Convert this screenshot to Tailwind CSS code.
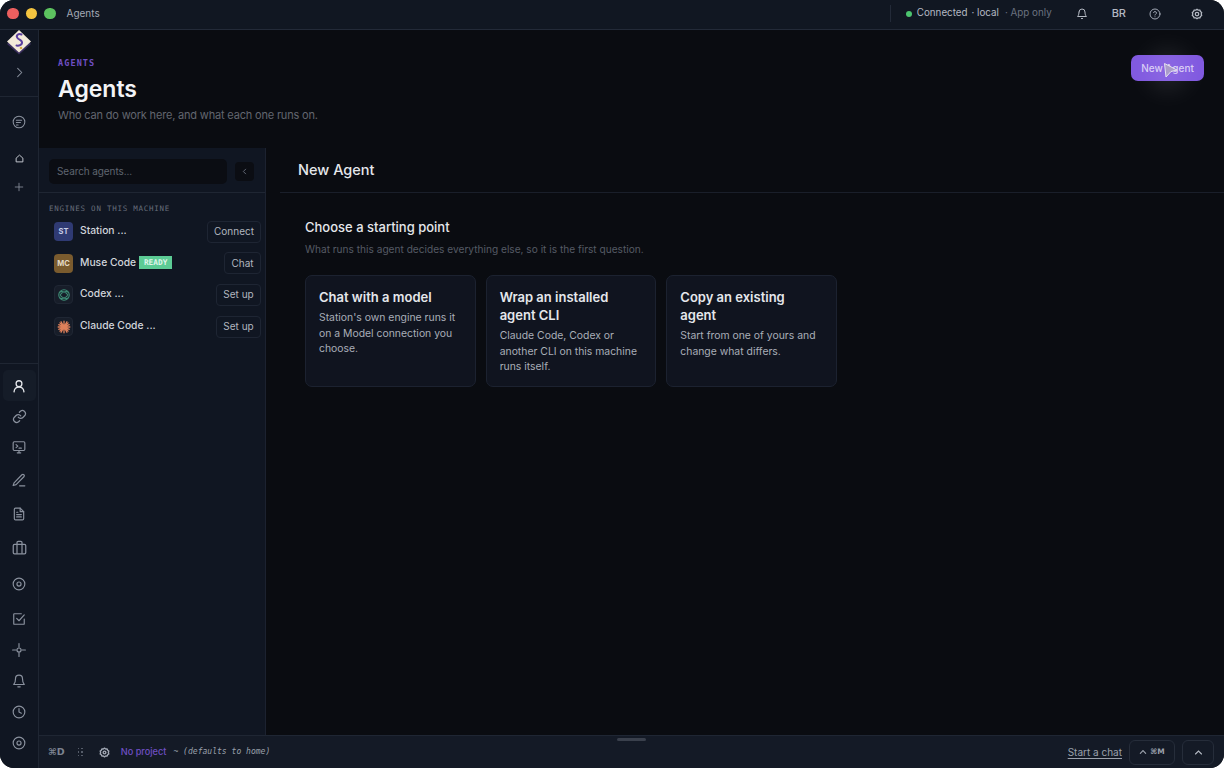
<!DOCTYPE html>
<html lang="en">
<head>
    <meta name="viewport" content="width=device-width, initial-scale=1.0">
    <title>Agents</title>
    <script src="https://cdn.jsdelivr.net/npm/@tailwindcss/browser@4"></script>
</head>
<body class="bg-white font-['Inter',sans-serif] overflow-hidden">
<div class="relative w-[1224px] h-[768px] flex flex-col rounded-[14px] overflow-hidden bg-[#0a0c11] text-gray-200">

    <!-- title bar -->
    <header class="h-[30px] shrink-0 flex items-center bg-[#111722] border-b border-[#232a38] pl-[7px] pb-[2px]">
        <div class="flex gap-[7px] items-center">
            <span class="w-[11.5px] h-[11.5px] rounded-full bg-[#ec5f5f]"></span>
            <span class="w-[11.5px] h-[11.5px] rounded-full bg-[#f4c440]"></span>
            <span class="w-[11.5px] h-[11.5px] rounded-full bg-[#5cc25f]"></span>
        </div>
        <span class="ml-[11px] text-[10px] text-[#a3a9b5]">Agents</span>
        <div class="ml-auto flex items-center h-full text-[9.800px]">
            <span class="w-px h-[17px] bg-[#232a38] mr-[15px]"></span>
            <span class="w-[6px] h-[6px] rounded-full bg-[#4cc46f] mr-[5px]"></span>
            <span class="text-[#b4b9c3]">Connected</span>
            <span class="ml-[4px] text-[#b4b9c3]">· local</span>
            <span class="ml-[6px] text-[#6b7280]">· App only</span>
            <svg class="ml-[24px]" width="12" height="12" viewBox="0 0 24 24" fill="none" stroke="#b4b9c3" stroke-width="2" stroke-linecap="round" stroke-linejoin="round"><path d="M6 8a6 6 0 0 1 12 0c0 7 3 9 3 9H3s3-2 3-9"/><path d="M10.5 21a1.8 1.8 0 0 0 3 0"/></svg>
            <span class="ml-[24px] text-[11px] font-medium text-[#b4b9c3]">BR</span>
            <svg class="ml-[23px]" width="12" height="12" viewBox="0 0 24 24" fill="none" stroke="#a3a9b5" stroke-width="2" stroke-linecap="round" stroke-linejoin="round"><circle cx="12" cy="12" r="10"/><path d="M9.1 9a3 3 0 0 1 5.8 1c0 2-3 2.6-3 4"/><path d="M12 17.5h.01"/></svg>
            <svg class="ml-[30px] mr-[21px]" width="12" height="12" viewBox="0 0 24 24" fill="none" stroke="#b4b9c3" stroke-width="2.500" stroke-linejoin="round"><path d="M12 2.5l2.6 1.8 3.2-.2 1 3 2.6 1.900-1 3 1 3-2.600 1.900-1 3-3.200-.2L12 21.500l-2.600-1.800-3.200.2-1-3-2.600-1.900 1-3-1-3 2.600-1.900 1-3 3.200.2z"/><circle cx="12" cy="12" r="3.500"/></svg>
        </div>
    </header>

    <div class="flex-1 min-h-0 flex">
        <!-- icon rail -->
        <nav class="w-[39px] shrink-0 flex flex-col bg-[#101622] border-r border-[#1f2633] text-[#8a919e]">
            <div class="h-[67px] shrink-0 flex flex-col items-center border-b border-[#1f2633]">
                <svg class="-mt-[1px]" width="26" height="26" viewBox="0 0 26 26">
                    <path d="M13 3.500L25 15 13 25.500 1 15z" fill="#3b2f5e"/>
                    <path d="M13 1L25 12.500 13 23.500 1 12.500z" fill="#f3ead9"/>
                    <path d="M15.500 5.500c-3-1.500-6 1-4 3.500 1.500 2 5 2 4.500 5-.3 2-3 3-5.500 2.500" fill="none" stroke="#5b3f9e" stroke-width="2" stroke-linecap="round"/>
                    <circle cx="15" cy="19" r="1.300" fill="#d6a94a"/>
                </svg>
                <svg class="mt-[12px]" width="11" height="11" viewBox="0 0 24 24" fill="none" stroke="currentColor" stroke-width="2.200" stroke-linecap="round" stroke-linejoin="round"><path d="M8 3l9 9-9 9"/></svg>
            </div>
            <div class="flex flex-col items-center">
                <span class="h-[25px] mt-[12px] flex items-center">
                    <svg width="14" height="14" viewBox="0 0 24 24" fill="none" stroke="currentColor" stroke-width="1.800" stroke-linecap="round"><circle cx="12" cy="12" r="10"/><path d="M7.500 9h9M7.500 13h7M7.500 17h3"/></svg>
                </span>
                <span class="h-[12px] mt-[18px] flex items-center">
                    <svg width="9" height="9" viewBox="0 0 24 24" fill="none" stroke="#c4c8d0" stroke-width="2.600" stroke-linejoin="round"><path d="M12 3l9 8v10H3V11z"/></svg>
                </span>
                <span class="h-[12px] mt-[17px] flex items-center">
                    <svg width="10" height="10" viewBox="0 0 24 24" fill="none" stroke="currentColor" stroke-width="2" stroke-linecap="round"><path d="M12 3v18M3 12h18"/></svg>
                </span>
            </div>
            <div class="mt-auto flex flex-col border-t border-[#1f2633] pt-[6px] pb-[10px] items-center">
                <span class="w-[33px] h-[31px] flex items-center justify-center rounded-[5px] bg-[#151c28] text-[#e5e7eb]">
                    <svg width="14" height="14" viewBox="0 0 24 24" fill="none" stroke="currentColor" stroke-width="2.200" stroke-linecap="round"><circle cx="12" cy="8" r="5"/><path d="M3.500 22c.5-5 4-8 8.500-8s8 3 8.500 8"/></svg>
                </span>
                <span class="h-[30px] flex items-center">
                    <svg width="15" height="15" viewBox="0 0 24 24" fill="none" stroke="currentColor" stroke-width="2" stroke-linecap="round"><path d="M10 13a5 5 0 0 0 7.500.5l3-3a5 5 0 0 0-7-7l-1.700 1.700"/><path d="M14 11a5 5 0 0 0-7.500-.5l-3 3a5 5 0 0 0 7 7l1.700-1.700"/></svg>
                </span>
                <span class="h-[31px] flex items-center">
                    <svg width="14" height="14" viewBox="0 0 24 24" fill="none" stroke="currentColor" stroke-width="2" stroke-linecap="round" stroke-linejoin="round"><rect x="2" y="3" width="20" height="15" rx="2"/><path d="M7 8l3 2.500L7 13M12 14h4M9 22h6M12 18v4"/></svg>
                </span>
                <span class="h-[36px] flex items-center">
                    <svg width="14" height="14" viewBox="0 0 24 24" fill="none" stroke="currentColor" stroke-width="2" stroke-linecap="round" stroke-linejoin="round"><path d="M13 22h9"/><path d="M17 3a2.400 2.400 0 0 1 3.400 3.400L7 20l-5 1.500L3.500 17z"/></svg>
                </span>
                <span class="h-[32px] flex items-center">
                    <svg width="14" height="14" viewBox="0 0 24 24" fill="none" stroke="currentColor" stroke-width="2" stroke-linecap="round" stroke-linejoin="round"><path d="M14 2H6a2 2 0 0 0-2 2v16a2 2 0 0 0 2 2h12a2 2 0 0 0 2-2V8z"/><path d="M14 2v6h6M8 13h8M8 17h8M8 9h2"/></svg>
                </span>
                <span class="h-[34px] flex items-center">
                    <svg width="15" height="15" viewBox="0 0 24 24" fill="none" stroke="currentColor" stroke-width="2" stroke-linejoin="round"><rect x="2" y="7" width="20" height="15" rx="2"/><path d="M16 7V4a2 2 0 0 0-2-2h-4a2 2 0 0 0-2 2v3M8 7v15M16 7v15"/></svg>
                </span>
                <span class="h-[40px] flex items-center">
                    <svg width="14" height="14" viewBox="0 0 24 24" fill="none" stroke="currentColor" stroke-width="2"><circle cx="12" cy="12" r="10"/><circle cx="12" cy="12" r="3.500"/></svg>
                </span>
                <span class="h-[30px] flex items-center">
                    <svg width="14" height="14" viewBox="0 0 24 24" fill="none" stroke="currentColor" stroke-width="2" stroke-linecap="round" stroke-linejoin="round"><path d="M21 12v8a1 1 0 0 1-1 1H4a1 1 0 0 1-1-1V4a1 1 0 0 1 1-1h12"/><path d="M8 11l4 4 9-10"/></svg>
                </span>
                <span class="h-[31px] flex items-center">
                    <svg width="14" height="14" viewBox="0 0 24 24" fill="none" stroke="currentColor" stroke-width="2" stroke-linecap="round"><circle cx="12" cy="12" r="3.500"/><path d="M12 1v6M12 17v6M1 12h6M17 12h6"/></svg>
                </span>
                <span class="h-[31px] flex items-center">
                    <svg width="14" height="14" viewBox="0 0 24 24" fill="none" stroke="currentColor" stroke-width="2" stroke-linecap="round" stroke-linejoin="round"><path d="M6 8a6 6 0 0 1 12 0c0 7 3 10 3 10H3s3-3 3-10"/><path d="M10 22h4"/></svg>
                </span>
                <span class="h-[31px] flex items-center">
                    <svg width="14" height="14" viewBox="0 0 24 24" fill="none" stroke="currentColor" stroke-width="2" stroke-linecap="round" stroke-linejoin="round"><circle cx="12" cy="12" r="10"/><path d="M12 6v6l4 2"/></svg>
                </span>
                <span class="h-[31px] flex items-center">
                    <svg width="14" height="14" viewBox="0 0 24 24" fill="none" stroke="currentColor" stroke-width="2"><circle cx="12" cy="12" r="10"/><circle cx="12" cy="12" r="3.500"/></svg>
                </span>
            </div>
        </nav>

        <div class="flex-1 min-w-0 flex flex-col">
            <!-- page header -->
            <section class="h-[118px] shrink-0 flex justify-between pl-[19px] pr-[20px]">
                <div class="pt-[27px]">
                    <p class="font-['DejaVu_Sans_Mono',monospace] font-bold text-[8.500px] leading-[10px] tracking-[1.100px] text-[#6f4fc4] mt-[1px]">AGENTS</p>
                    <h1 class="mt-[6px] text-[23px] leading-[30px] font-semibold text-[#f3f4f6]">Agents</h1>
                    <p class="mt-[3px] text-[11px] leading-[16px] tracking-[-0.18px] text-[#62666f]">Who can do work here, and what each one runs on.</p>
                </div>
                <button class="mt-[25px] w-[73px] h-[26px] rounded-[7px] bg-[#8059e0] text-[10px] font-medium text-[#d8ccf5]">New Agent</button>
            </section>

            <div class="flex-1 min-h-0 flex">
                <!-- agents list -->
                <aside class="w-[227px] shrink-0 bg-[#101622] border-r border-[#1c2230]">
                    <div class="h-[45px] flex items-center gap-[8px] pl-[10px] pt-[3px] border-b border-[#1f2633]">
                        <div class="w-[178px] h-[25px] flex items-center px-[8px] rounded-[5px] bg-[#0b0d13] text-[10px] tracking-[-0.1px] text-[#5f6570]">Search agents...</div>
                        <button class="w-[19px] h-[19px] flex items-center justify-center rounded-[4px] bg-[#0b0d13] text-[#6b7280]">
                            <svg width="7" height="7" viewBox="0 0 24 24" fill="none" stroke="currentColor" stroke-width="3" stroke-linecap="round"><path d="M16 4l-8 8 8 8"/></svg>
                        </button>
                    </div>
                    <p class="mt-[12px] ml-[10px] font-['DejaVu_Sans_Mono',monospace] text-[7.500px] leading-[8px] tracking-[0.75px] text-[#666d7a]">ENGINES ON THIS MACHINE</p>
                    <ul class="mt-[3px] pl-[15px] pr-[4px] flex flex-col">
                        <li class="h-[31.600px] flex items-center">
                            <span class="w-[19px] h-[19px] rounded-[4px] bg-[#2f3a73] flex items-center justify-center text-[7.500px] font-bold text-[#c8cde6]">ST</span>
                            <span class="ml-[7px] -mt-[2px] text-[10.300px] font-medium text-[#d1d5db]">Station ...</span>
                            <button class="ml-auto w-[54px] h-[22px] rounded-[4px] border border-[#1e2533] text-[10px] text-[#b0b5bf]">Connect</button>
                        </li>
                        <li class="h-[31.600px] flex items-center">
                            <span class="w-[19px] h-[19px] rounded-[4px] bg-[#7a5b2e] flex items-center justify-center text-[7.500px] font-bold text-[#e3d9c4]">MC</span>
                            <span class="ml-[7px] -mt-[2px] text-[10.300px] font-medium text-[#d1d5db]">Muse Code</span>
                            <span class="ml-[3px] -mt-[1px] h-[13px] w-[33px] bg-[#5ccb95] flex items-center justify-center font-['DejaVu_Sans_Mono',monospace] font-bold text-[7.800px] text-[#dff5ea]">READY</span>
                            <button class="ml-auto w-[37px] h-[22px] rounded-[4px] border border-[#1e2533] text-[10px] text-[#b0b5bf]">Chat</button>
                        </li>
                        <li class="h-[31.600px] flex items-center">
                            <span class="w-[19px] h-[19px] rounded-[4px] bg-[#171d29] border border-[#1f2633] flex items-center justify-center">
                                <svg width="14" height="14" viewBox="0 0 24 24" fill="none" stroke="#3f8f78" stroke-width="1.800"><circle cx="12" cy="12" r="9"/><path d="M5 7c4-2 10 0 14 5M19 7c-4-2-10 0-14 5M5 17c4 2 10 0 14-5M19 17c-4 2-10 0-14-5"/></svg>
                            </span>
                            <span class="ml-[7px] -mt-[2px] text-[10.300px] font-medium text-[#d1d5db]">Codex ...</span>
                            <button class="ml-auto w-[45px] h-[22px] rounded-[4px] border border-[#1e2533] text-[10px] text-[#b0b5bf]">Set up</button>
                        </li>
                        <li class="h-[31.600px] flex items-center">
                            <span class="w-[19px] h-[19px] rounded-[4px] bg-[#171d29] border border-[#1f2633] flex items-center justify-center">
                                <svg width="14" height="14" viewBox="0 0 24 24" fill="none" stroke="#e0805a" stroke-width="2.200" stroke-linecap="round"><path d="M12 2v20M2 12h20M5 5l14 14M19 5L5 19M7 3l10 18M17 3L7 21M3 8l18 8M21 8L3 16"/></svg>
                            </span>
                            <span class="ml-[7px] -mt-[2px] text-[10.300px] font-medium text-[#d1d5db]">Claude Code ...</span>
                            <button class="ml-auto w-[45px] h-[22px] rounded-[4px] border border-[#1e2533] text-[10px] text-[#b0b5bf]">Set up</button>
                        </li>
                    </ul>
                </aside>

                <!-- new agent pane -->
                <main class="flex-1 min-w-0">
                    <div class="h-[45px] ml-[14px] flex items-center pl-[18px] border-b border-[#1a1f2a]">
                        <h2 class="text-[14.500px] font-medium text-[#e5e7eb]">New Agent</h2>
                    </div>
                    <div class="pl-[39px] pt-[25px]">
                        <h3 class="text-[13px] leading-[18px] font-medium text-[#e5e7eb]">Choose a starting point</h3>
                        <p class="mt-[5px] text-[10.150px] leading-[16px] text-[#555a64]">What runs this agent decides everything else, so it is the first question.</p>
                        <div class="mt-[18px] grid grid-cols-[170.670px_170.670px_170.670px] gap-[10px]">
                            <div class="h-[112px] rounded-[7px] bg-[#10141f] border border-[#1c2230] pt-[12px] px-[13px]">
                                <h4 class="text-[13px] leading-[18px] font-semibold text-[#e5e7eb]">Chat with a model</h4>
                                <p class="mt-[4px] text-[10.400px] leading-[15.500px] text-[#a9aeb8]">Station's own engine runs it on a Model connection you choose.</p>
                            </div>
                            <div class="h-[112px] rounded-[7px] bg-[#10141f] border border-[#1c2230] pt-[12px] px-[13px]">
                                <h4 class="text-[13px] leading-[18px] font-semibold text-[#e5e7eb]">Wrap an installed agent CLI</h4>
                                <p class="mt-[4px] text-[10.400px] leading-[15.500px] text-[#a9aeb8]">Claude Code, Codex or another CLI on this machine runs itself.</p>
                            </div>
                            <div class="h-[112px] rounded-[7px] bg-[#10141f] border border-[#1c2230] pt-[12px] px-[13px]">
                                <h4 class="text-[13px] leading-[18px] font-semibold text-[#e5e7eb]">Copy an existing agent</h4>
                                <p class="mt-[4px] text-[10.400px] leading-[15.500px] text-[#a9aeb8]">Start from one of yours and change what differs.</p>
                            </div>
                        </div>
                    </div>
                </main>
            </div>

            <!-- bottom bar -->
            <footer class="relative h-[33px] shrink-0 flex items-center bg-[#141a26] border-t border-[#1f2633] pl-[10px] pr-[10px]">
                <span class="absolute left-[578px] top-[2px] w-[29px] h-[3px] rounded-full bg-[#3a404c]"></span>
                <span class="font-['DejaVu_Sans',sans-serif] text-[9.500px] font-bold text-[#7d8491] -ml-[1px]">⌘D</span>
                <span class="ml-[13px] grid grid-cols-2 gap-[2px]">
                    <i class="w-[1.500px] h-[1.500px] bg-[#565d6a]"></i><i class="w-[1.500px] h-[1.500px] bg-[#565d6a]"></i>
                    <i class="w-[1.500px] h-[1.500px] bg-[#565d6a]"></i><i class="w-[1.500px] h-[1.500px] bg-[#565d6a]"></i>
                    <i class="w-[1.500px] h-[1.500px] bg-[#565d6a]"></i><i class="w-[1.500px] h-[1.500px] bg-[#565d6a]"></i>
                </span>
                <svg class="ml-[16px]" width="11" height="11" viewBox="0 0 24 24" fill="none" stroke="#a3a9b5" stroke-width="3" stroke-linejoin="round"><path d="M12 2.500l2.600 1.800 3.200-.2 1 3 2.600 1.900-1 3 1 3-2.600 1.900-1 3-3.200-.2L12 21.500l-2.600-1.800-3.200.2-1-3-2.600-1.900 1-3-1-3 2.600-1.900 1-3 3.200.2z"/><circle cx="12" cy="12" r="3"/></svg>
                <span class="ml-[11px] text-[9.200px] font-medium text-[#6f4fc4]">No project</span>
                <span class="ml-[7px] font-['DejaVu_Sans_Mono',monospace] italic text-[8.050px] text-[#9aa0ab]">~ (defaults to home)</span>
                <a class="ml-auto text-[10px] text-[#9aa0ab] underline underline-offset-2">Start a chat</a>
                <button class="ml-[7px] w-[46px] h-[25px] flex items-center justify-center gap-[3px] rounded-[6px] border border-[#262d3a] text-[#9aa0ab]">
                    <svg width="8" height="8" viewBox="0 0 24 24" fill="none" stroke="currentColor" stroke-width="3.500" stroke-linecap="round"><path d="M4 16l8-8 8 8"/></svg>
                    <span class="font-['DejaVu_Sans',sans-serif] font-bold text-[7.500px]">⌘M</span>
                </button>
                <button class="ml-[7px] w-[32px] h-[25px] flex items-center justify-center rounded-[6px] border border-[#262d3a] text-[#b4b9c3]">
                    <svg width="9" height="9" viewBox="0 0 24 24" fill="none" stroke="currentColor" stroke-width="3" stroke-linecap="round"><path d="M4 16l8-8 8 8"/></svg>
                </button>
            </footer>
        </div>
    </div>

    <!-- cursor over the New Agent button -->
    <div class="absolute left-[1148px] top-[50px] w-[40px] h-[40px] rounded-full bg-white/10 blur-md"></div>
    <svg class="absolute left-[1163px] top-[62px]" width="15" height="16" viewBox="0 0 15 16"><path d="M1.500 1.500L14 8l-6 1.500L3 15z" fill="#a99bc9" stroke="#e5e1ef" stroke-width="1" stroke-linejoin="round"/></svg>
</div>
</body>
</html>
